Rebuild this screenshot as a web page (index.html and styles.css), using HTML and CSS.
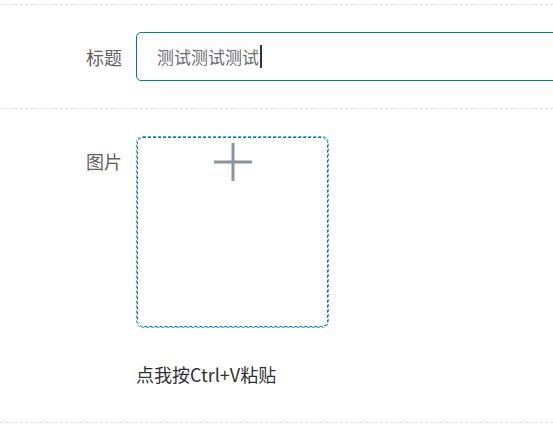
FILE: index.html
```html
<!DOCTYPE html>
<html lang="zh">
<head>
<meta charset="utf-8">
<link rel="stylesheet" href="styles.css">
</head>
<body>
<div class="form">
  <div class="row row-title">
    <div class="label">标题</div>
    <div class="field">
      <div class="input"><span class="value">测试测试测试</span><span class="caret"></span></div>
    </div>
  </div>
  <div class="row row-image">
    <div class="label">图片</div>
    <div class="field">
      <div class="uploader">
        <svg class="plus" width="40" height="40" viewBox="0 0 40 40">
          <path d="M20 1V39M1 20H39" stroke="#8c939d" stroke-width="3" fill="none"/>
        </svg>
      </div>
      <div class="hint">点我按Ctrl+V粘贴</div>
    </div>
  </div>
</div>
</body>
</html>
```
FILE: styles.css
```css
html, body {
  margin: 0;
  padding: 0;
  background: #fff;
  overflow: hidden;
}
body {
  font-family: "Noto Sans CJK SC", "Noto Sans", sans-serif;
  font-size: 18px;
  color: #606266;
  padding-top: 4px;
}
.form {
  border-top: 1px dashed #dcdfe6;
}
.row {
  display: flex;
  gap: 14px;
  border-bottom: 1px dashed #dcdfe6;
}
.row-title {
  padding: 27px 0 26px;
}
.row-image {
  padding: 27px 0 36px;
}
.label {
  width: 122px;
  flex: none;
  text-align: right;
  line-height: 50px;
  color: #606266;
}
.field {
  flex: none;
}
.input {
  width: 430px;
  height: 49px;
  box-sizing: border-box;
  border: 1px solid #00827f;
  border-radius: 5px;
  padding-left: 20px;
  display: flex;
  align-items: center;
}
.value {
  font-size: 17px;
  line-height: 24px;
  color: #6a6d73;
}
.caret {
  width: 2px;
  height: 23px;
  background: #303133;
  margin-left: 1px;
}
.uploader {
  width: 193px;
  height: 192px;
  box-sizing: border-box;
  border: 1px dashed #4aa3f5;
  outline: 1px dashed #00827f;
  outline-offset: -2px;
  border-radius: 7px;
  display: flex;
  justify-content: center;
  align-items: flex-start;
  padding-top: 5px;
}
.plus {
  display: block;
}
.hint {
  margin-top: 34px;
  line-height: 24px;
  color: #303133;
}
```
